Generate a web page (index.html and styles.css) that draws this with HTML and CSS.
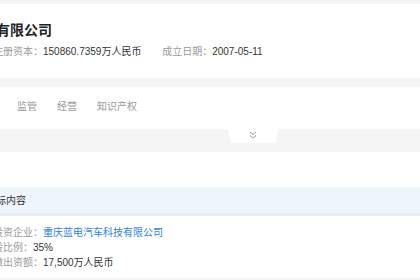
FILE: index.html
```html
<!DOCTYPE html>
<html lang="zh-CN">

<head>
    <meta charset="UTF-8">
    <meta name="viewport" content="width=device-width, initial-scale=1.0">
    <title>企业详情</title>

    <link rel="stylesheet" href="styles.css">
</head>

<body>
    <!-- 头部 公司名称 + 基本信息 -->
    <div class="header">
        <h1 class="title">有限公司</h1>
        <div class="meta">
            <span class="label">注册资本：</span><span class="value">150860.7359万人民币</span>
            <span class="label gap">成立日期：</span><span class="value">2007-05-11</span>
        </div>
    </div>

    <!-- 标签页 -->
    <div class="tabs">
        <span class="tab">监管</span>
        <span class="tab">经营</span>
        <span class="tab">知识产权</span>
    </div>

    <!-- 展开按钮 -->
    <div class="fold">
        <div class="fold-btn">
            <svg width="8" height="8" viewBox="0 0 8 8">
                <polyline points="1,1 4,3.5 7,1" fill="none" stroke="#9a9a9a" stroke-width="1" />
                <polyline points="1,4.5 4,7 7,4.5" fill="none" stroke="#9a9a9a" stroke-width="1" />
            </svg>
        </div>
    </div>

    <!-- 内容区 -->
    <div class="section">
        <div class="section-head">目标内容</div>
        <div class="rows">
            <div class="row"><span class="label">被投资企业：</span><a class="link">重庆蓝电汽车科技有限公司</a></div>
            <div class="row"><span class="label">持股比例：</span><span class="value">35%</span></div>
            <div class="row"><span class="label">认缴出资额：</span><span class="value">17,500万人民币</span></div>
        </div>
    </div>
</body>

</html>
```

FILE: styles.css
```css
body {
    margin: 0;
    padding-top: 4px;
    background: #f5f5f6;
    font-family: "Liberation Sans", "Noto Sans CJK SC", sans-serif;
    overflow: hidden;
    height: 280px;
}

.label {
    color: #9a9a9a;
}

.value {
    color: #333;
}

/* 头部 */
.header {
    background: #fff;
    height: 74px;
    padding-top: 16px;
    box-sizing: border-box;
}

.title {
    margin: 0 0 0 -4px;
    font-size: 14px;
    line-height: 20px;
    font-weight: bold;
    color: #222;
}

.meta {
    margin: 5px 0 0 -7px;
    font-size: 10px;
    line-height: 14px;
    white-space: nowrap;
}

.meta .gap {
    margin-left: 18px;
}

/* 标签页 */
.tabs {
    margin-top: 9px;
    background: #fff;
    height: 42px;
    box-sizing: border-box;
    padding: 13px 0 0 17px;
    display: flex;
    gap: 20px;
    font-size: 10px;
    line-height: 14px;
    color: #999;
}

/* 展开按钮 梯形 */
.fold {
    height: 23px;
    padding-left: 228px;
}

.fold-btn {
    width: 50px;
    height: 14px;
    background: #fff;
    clip-path: polygon(0 0, 100% 0, 96% 100%, 6% 100%);
    display: flex;
    justify-content: center;
    padding-top: 2px;
    box-sizing: border-box;
}

/* 内容区 */
.section {
    background: #fff;
    height: 126px;
    padding-top: 35px;
    box-sizing: border-box;
    font-size: 10px;
}

.section-head {
    background: #eef5fd;
    border-bottom: 3px solid #e6eef8;
    padding: 7px 0 5px;
    margin-left: -14px;
    line-height: 14px;
    color: #333;
}

.rows {
    margin: 9px 0 0 -17px;
    line-height: 15px;
    white-space: nowrap;
}

.link {
    color: #2f7fe0;
}
```
